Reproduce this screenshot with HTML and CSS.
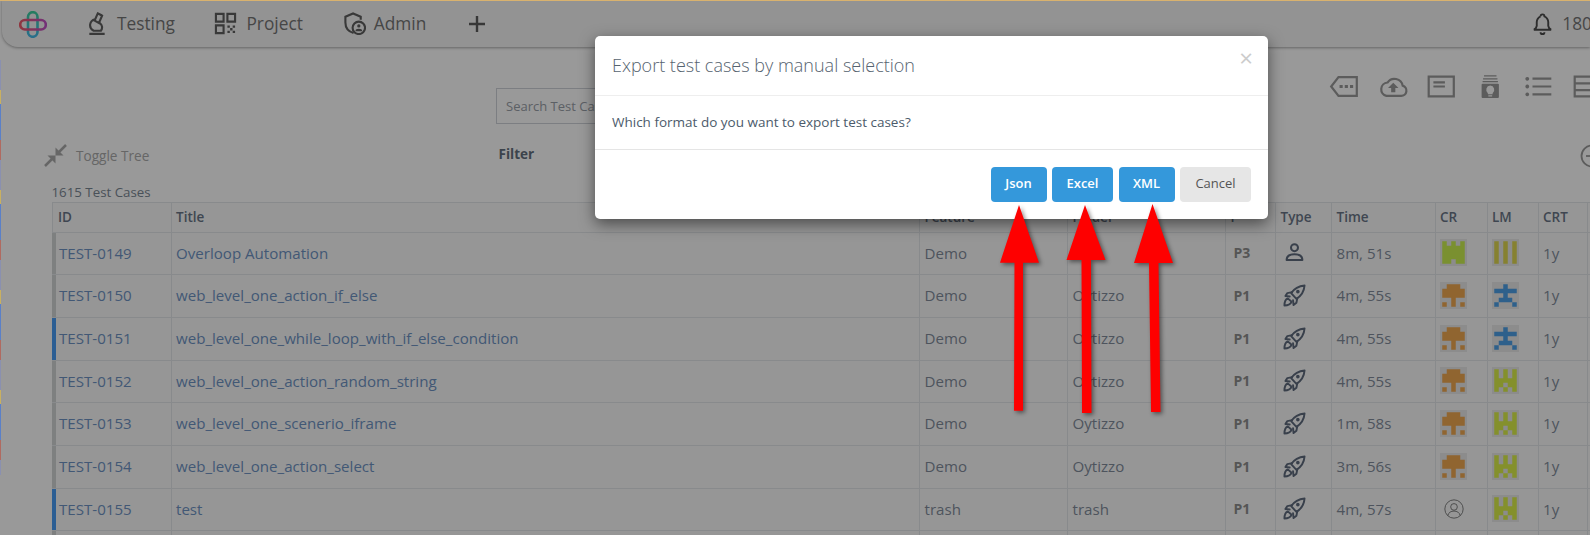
FILE: index.html
```html
<!DOCTYPE html>
<html lang="en">
<head>
<meta charset="utf-8">
<title>Test Cases</title>
<link rel="stylesheet" href="styles.css">
</head>
<body>
<svg class="defs" width="0" height="0" aria-hidden="true">
  <defs>
    <symbol id="rocket" viewBox="0 0 24 24"><path d="M22.500 1.500C16 2 11.500 5 8.500 9.500L14 15.500C19 12.500 22 8 22.500 1.500Z"/><path d="M9.500 8.500L4.500 9.500 2.500 12.500 7 13"/><path d="M15 14.500L14 19.500 11 22 10.500 17"/><path d="M5 15C2.500 16 1.500 19 1.500 22.500 5 22.500 8 21 9 18.500Z"/><circle class="win" cx="15.500" cy="8" r="1.900"/></symbol>
    <symbol id="castle" viewBox="0 0 60 60"><rect width="60" height="60" class="ib"/><path d="M5 5h10v10h10v-10h10v10h10v-10h10v50h-20v-10h-10v10h-20z"/></symbol>
    <symbol id="stripes" viewBox="0 0 60 60"><rect width="60" height="60" class="ib"/><path d="M5 5h10v50h-10zM25 5h10v50h-10zM45 5h10v50h-10z"/></symbol>
    <symbol id="mush" viewBox="0 0 60 60"><rect width="60" height="60" class="ib"/><path d="M15 5h30v10h10v20h-20v20h-10v-20h-20v-20h10zM5 45h10v10h-10zM45 45h10v10h-10z"/></symbol>
    <symbol id="man" viewBox="0 0 60 60"><rect width="60" height="60" class="ib"/><path d="M25 5h10v10h20v10h-20v10h10v10h-30v-10h10v-10h-20v-10h20z"/><path d="M5 45h10v10h-10zM45 45h10v10h-10z"/></symbol>
    <symbol id="fort" viewBox="0 0 60 60"><rect width="60" height="60" class="ib"/><path fill-rule="evenodd" d="M5 5h10v20h10v-20h10v20h10v-20h10v50h-10v-10h-10v10h-10v-10h-10v10h-10zM25 35h10v10h-10z"/></symbol>
  </defs>
</svg>

<header class="nav">
  <svg class="logo" viewBox="0 0 28 27" aria-hidden="true">
    <defs>
      <linearGradient id="lgv" x1="0" y1="0" x2="0" y2="1"><stop offset="0" stop-color="#3fd0a0"/><stop offset="1" stop-color="#45b8e8"/></linearGradient>
      <linearGradient id="lgh" x1="0" y1="0" x2="1" y2="0"><stop offset="0" stop-color="#ef5a6a"/><stop offset="1" stop-color="#c050c8"/></linearGradient>
    </defs>
    <rect x="9" y="1.2" width="9.5" height="24.6" rx="4.75" class="lgv"/>
    <rect x="1.2" y="9" width="25.6" height="9.5" rx="4.75" class="lgh"/>
  </svg>
  <a class="nav-item testing">
    <svg class="ic mic" viewBox="0 0 18 24" aria-hidden="true"><path d="M1 22.800h16M5 19.500h9M7 7.500a7 6.500 0 0 0 -1.500 12M9.800 1.500l-3.300 7.500 4.500 2.400 3.300-7.500zM9.500 1.200l4.800 2.500M12 11.500a5.500 5.500 0 0 1 1 8"/></svg>
    <span>Testing</span>
  </a>
  <a class="nav-item project">
    <svg class="ic" viewBox="0 0 24 24" aria-hidden="true"><path d="M2 2h8v8h-8zM14 2h8v8h-8zM2 14h8v8h-8z"/><path class="dots" d="M14 14h2.500v2.500h-2.500zM19.500 14h2.500v2.500h-2.500zM16.800 16.800h2.500v2.500h-2.500zM14 19.500h2.500v2.500h-2.500zM19.500 19.500h2.500v2.500h-2.500z"/></svg>
    <span>Project</span>
  </a>
  <a class="nav-item admin">
    <svg class="ic shield" viewBox="0 0 24 24" aria-hidden="true"><path d="M11 22c-5-1.500-8.500-5.500-8.500-11v-6l8-3.500 8 3.500v3"/><circle cx="16.500" cy="16.500" r="6.500"/><circle class="dots" cx="16.500" cy="14.500" r="1.700"/><path class="dots" d="M13 20a3.500 2.500 0 0 1 7 0z"/></svg>
    <span>Admin</span>
  </a>
  <svg class="plus" viewBox="0 0 16 16" aria-hidden="true"><path d="M8 0v16M0 8h16"/></svg>
  <div class="notif">
    <svg class="bell" viewBox="0 0 24 24" aria-hidden="true"><path d="M10 4.500a2 2 0 1 1 4 0a7 7 0 0 1 4 6v4a5 5 0 0 0 3 4h-18a5 5 0 0 0 3 -4v-4a7 7 0 0 1 4 -6"/><path d="M10 21a2 2 0 0 0 4 0"/></svg>
    <span>180</span>
  </div>
</header>

<section class="tools">
  <div class="search">Search Test Cases</div>
  <div class="tool-icons">
    <svg class="ti" viewBox="0 0 27 22"><path d="M8 2h17.500v18h-17.500l-7-9z"/><path class="fill" d="M9 9.500h3v3h-3zM14 9.500h3v3h-3zM19 9.500h3v3h-3z"/></svg>
    <svg class="ti" viewBox="0 0 27 22"><path d="M7 20h14a5 5 0 0 0 1.500-9.800a8 8 0 0 0-14.500-3a6.500 6.500 0 0 0-1 12.800z"/><path class="fill" d="M13.500 7.500l5 5h-3v4h-4v-4h-3z"/></svg>
    <svg class="ti" viewBox="0 0 27 22"><path d="M1.500 1.500h24v19h-24zM6 7h11M6 11h11"/></svg>
    <svg class="ti" viewBox="0 0 27 24"><path class="thin" d="M7 1h13M6 4h15M5.500 7h16"/><path class="fill" fill-rule="evenodd" d="M5.500 9h16a1 1 0 0 1 1 1v13a1 1 0 0 1-1 1h-16a1 1 0 0 1-1-1v-13a1 1 0 0 1 1-1zM13.500 11a4.500 4.500 0 0 0-2.500 8v1h5v-1a4.500 4.500 0 0 0-2.500-8zM11.500 21v1.500h4v-1.500z"/></svg>
    <svg class="ti" viewBox="0 0 27 22"><path d="M8 3.500h18M8 11h18M8 18.500h18"/><path class="fill" d="M3 1.800a1.800 1.800 0 1 1-.01 0zM3 9.200a1.800 1.800 0 1 1-.01 0zM3 16.700a1.800 1.800 0 1 1-.01 0z"/></svg>
    <svg class="ti" viewBox="0 0 27 22"><path d="M1.500 1.500h24v19h-24zM1.500 8h24M1.500 14.500h24"/></svg>
  </div>
</section>

<section class="filters">
  <svg class="shrink" viewBox="0 0 23 23" aria-hidden="true"><path class="ln" d="M1 22l7-7M22 1l-7 7"/><path class="tip" d="M3.500 11.500h8v8zM19.500 11.500h-8v-8z"/></svg>
  <span class="toggle">Toggle Tree</span>
  <strong class="filter">Filter</strong>
  <svg class="circ" viewBox="0 0 24 24" aria-hidden="true"><circle cx="12" cy="12" r="10.500"/><path d="M6 12h12"/></svg>
</section>

<p class="count">1615 Test Cases</p>

<table class="cases">
  <colgroup>
    <col class="c-id"><col class="c-title"><col class="c-feature"><col class="c-folder"><col class="c-p"><col class="c-type"><col class="c-time"><col class="c-cr"><col class="c-lm"><col class="c-crt"><col class="c-rest">
  </colgroup>
  <thead>
    <tr><th>ID</th><th>Title</th><th>Feature</th><th>Folder</th><th>P</th><th>Type</th><th>Time</th><th>CR</th><th>LM</th><th>CRT</th><th></th></tr>
  </thead>
  <tbody>
    <tr class="short">
      <td class="gray"><a>TEST-0149</a></td><td><a>Overloop Automation</a></td><td>Demo</td><td></td><td class="pri">P3</td>
      <td><svg class="type person" viewBox="0 0 24 24"><circle cx="12" cy="6.500" r="4"/><path d="M3 20.500c0-4.500 4-6.500 9-6.500s9 2 9 6.500z"/></svg></td>
      <td>8m, 51s</td><td><svg class="idn i-green"><use href="#castle"/></svg></td><td><svg class="idn i-yellow"><use href="#stripes"/></svg></td><td>1y</td><td></td>
    </tr>
    <tr>
      <td class="gray"><a>TEST-0150</a></td><td><a>web_level_one_action_if_else</a></td><td>Demo</td><td>Oytizzo</td><td class="pri">P1</td>
      <td><svg class="type"><use href="#rocket"/></svg></td>
      <td>4m, 55s</td><td><svg class="idn i-orange"><use href="#mush"/></svg></td><td><svg class="idn i-blue"><use href="#man"/></svg></td><td>1y</td><td></td>
    </tr>
    <tr>
      <td class="blue"><a>TEST-0151</a></td><td><a>web_level_one_while_loop_with_if_else_condition</a></td><td>Demo</td><td>Oytizzo</td><td class="pri">P1</td>
      <td><svg class="type"><use href="#rocket"/></svg></td>
      <td>4m, 55s</td><td><svg class="idn i-orange"><use href="#mush"/></svg></td><td><svg class="idn i-blue"><use href="#man"/></svg></td><td>1y</td><td></td>
    </tr>
    <tr class="short">
      <td class="gray"><a>TEST-0152</a></td><td><a>web_level_one_action_random_string</a></td><td>Demo</td><td>Oytizzo</td><td class="pri">P1</td>
      <td><svg class="type"><use href="#rocket"/></svg></td>
      <td>4m, 55s</td><td><svg class="idn i-orange"><use href="#mush"/></svg></td><td><svg class="idn i-lime"><use href="#fort"/></svg></td><td>1y</td><td></td>
    </tr>
    <tr>
      <td class="gray"><a>TEST-0153</a></td><td><a>web_level_one_scenerio_iframe</a></td><td>Demo</td><td>Oytizzo</td><td class="pri">P1</td>
      <td><svg class="type"><use href="#rocket"/></svg></td>
      <td>1m, 58s</td><td><svg class="idn i-orange"><use href="#mush"/></svg></td><td><svg class="idn i-lime"><use href="#fort"/></svg></td><td>1y</td><td></td>
    </tr>
    <tr>
      <td class="gray"><a>TEST-0154</a></td><td><a>web_level_one_action_select</a></td><td>Demo</td><td>Oytizzo</td><td class="pri">P1</td>
      <td><svg class="type"><use href="#rocket"/></svg></td>
      <td>3m, 56s</td><td><svg class="idn i-orange"><use href="#mush"/></svg></td><td><svg class="idn i-lime"><use href="#fort"/></svg></td><td>1y</td><td></td>
    </tr>
    <tr class="short">
      <td class="blue"><a>TEST-0155</a></td><td><a>test</a></td><td>trash</td><td>trash</td><td class="pri">P1</td>
      <td><svg class="type"><use href="#rocket"/></svg></td>
      <td>4m, 57s</td>
      <td><svg class="avatar" viewBox="0 0 24 24"><circle cx="12" cy="12" r="11"/><circle cx="12" cy="9.500" r="4"/><path d="M4.500 20c1-4 4-5.500 7.500-5.500s6.500 1.500 7.500 5.500"/></svg></td>
      <td><svg class="idn i-lime"><use href="#fort"/></svg></td><td>1y</td><td></td>
    </tr>
    <tr><td class="gray"></td><td></td><td></td><td></td><td></td><td></td><td></td><td></td><td></td><td></td><td></td></tr>
  </tbody>
</table>

<div class="backdrop"></div>

<div class="modal" role="dialog">
  <div class="modal-head">
    <h4>Export test cases by manual selection</h4>
    <span class="close">×</span>
  </div>
  <div class="modal-body">Which format do you want to export test cases?</div>
  <div class="modal-foot">
    <button class="btn primary b-json">Json</button>
    <button class="btn primary b-excel">Excel</button>
    <button class="btn primary b-xml">XML</button>
    <button class="btn cancel">Cancel</button>
  </div>
</div>

<svg class="arrows" viewBox="0 0 1590 535" aria-hidden="true">
  <path d="M1019 205L1039 262.700H1023L1023 410.700H1014L1014.500 262.700H1000Z"/>
  <path d="M1085 205L1105.500 260H1091L1091.500 413H1082L1081.500 260H1066.500Z"/>
  <path d="M1152.500 204L1173 263H1158.500L1160.500 412H1151L1149 263H1134Z"/>
</svg>
```

FILE: styles.css
```css
* { box-sizing: border-box; }
html, body { margin: 0; height: 535px; overflow: hidden; }
body {
  position: relative;
  width: 1590px;
  background: #fff;
  font-family: "Open Sans", "Liberation Sans", sans-serif;
  font-size: 14px;
  color: #828c98;
}
.defs { position: absolute; }

/* navbar */
.nav {
  display: flex;
  align-items: center;
  height: 47px;
  margin-left: 2px;
  padding-left: 17px;
  background: #f6f6f6;
  border-bottom-left-radius: 16px;
  box-shadow: 0 1px 3px rgba(0,0,0,.35);
  white-space: nowrap;
  color: #757575;
  font-size: 17.300px;
}
.logo { width: 28px; height: 27px; flex: none; margin-top: 1px; }
.logo rect { fill: none; stroke-width: 2.600; }
.lgv { stroke: url(#lgv); }
.lgh { stroke: url(#lgh); }
.nav-item { display: flex; align-items: center; }
.ic { width: 23px; height: 23px; fill: none; stroke: #5f5f5f; stroke-width: 2.200; flex: none; }
.ic.mic { width: 18px; }
.ic .dots { fill: #5f5f5f; stroke: none; }
.testing { margin-left: 41px; gap: 11px; }
.project { margin-left: 39.500px; gap: 9px; }
.admin { margin-left: 40px; gap: 8px; }
.plus { width: 16px; height: 16px; margin-left: 43px; fill: none; stroke: #5c5c5c; stroke-width: 2.400; flex: none; }
.notif { display: flex; align-items: center; gap: 8px; margin-left: 1046px; flex: none; }
.bell { width: 23px; height: 23px; fill: none; stroke: #4c4c4c; stroke-width: 2; }

/* toolbars */
.tools { display: flex; align-items: flex-start; margin-top: 28px; height: 49px; padding-left: 496px; }
.search {
  width: 300px; height: 36px; margin-top: 13px; padding: 0 9px;
  border: 1px solid #cfd3d9;
  font-size: 13px; line-height: 34px; color: #9aa0a8; white-space: nowrap; overflow: hidden;
  flex: none;
}
.tool-icons { display: flex; margin-left: 524px; flex: none; }
.ti { width: 48.500px; height: 23px; fill: none; stroke: #999; stroke-width: 2.100; }
.ti .fill { fill: #999; stroke: none; }
.ti .thin { stroke-width: 1.300; }

.filters { display: flex; align-items: center; margin-top: 20px; height: 23px; padding-left: 44px; position: relative; }
.shrink { width: 23px; height: 23px; flex: none; }
.shrink .ln { stroke: #aaa; stroke-width: 2.500; fill: none; }
.shrink .tip { fill: #aaa; }
.toggle { margin-left: 9px; font-size: 13.600px; color: #aaa; width: 350px; white-space: nowrap; flex: none; }
.filter { margin-left: 72.500px; margin-top: -4px; font-size: 13.500px; font-weight: 700; color: #64707e; flex: none; }
.circ { width: 24px; height: 24px; margin-left: 1046px; fill: none; stroke: #999; stroke-width: 1.800; flex: none; }

.count { margin: 17px 0 2px 51.500px; height: 16px; font-size: 13.300px; line-height: 16px; color: #7b8794; white-space: nowrap; }

/* table */
.cases {
  border-collapse: collapse;
  table-layout: fixed;
  width: 1595px;
  margin-left: 52px;
  background: #fafbfb;
}
.c-id { width: 118.500px; }
.c-title { width: 748.500px; }
.c-feature { width: 148px; }
.c-folder { width: 158px; }
.c-p { width: 50px; }
.c-type { width: 56px; }
.c-time { width: 103.500px; }
.c-cr { width: 52px; }
.c-lm { width: 51px; }
.c-crt { width: 49.500px; }
.c-rest { width: 60px; }
.cases th, .cases td {
  border: 1px solid #e3e6ea;
  padding: 0 4.500px 2px;
  text-align: left;
  white-space: nowrap;
  font-size: 15.100px;
}
.cases th:first-child { padding-left: 5px; }
.cases td:first-child { padding-left: 6px; }
.cases th { height: 30px; font-weight: 600; font-size: 13.500px; color: #6a7687; }
.cases tbody tr { height: 43px; }
.cases tbody tr.short { height: 42px; }
.cases td { color: #838d9c; }
.cases a { color: #6f93c4; }
.cases td:first-child { position: relative; }
.cases td:first-child::before {
  content: ""; position: absolute; left: -1px; top: 0; bottom: 0; width: 3.500px;
}
.gray::before { background: #d3d5d5; }
.blue::before { background: #4a9df5; }
.cases td.pri { font-weight: 700; font-size: 14px; padding-left: 7.500px; color: #8e8e8e; }
.type { display: block; width: 23px; height: 23px; margin-left: 2px; fill: none; stroke: #5f6b7e; stroke-width: 2; stroke-linejoin: round; stroke-linecap: round; }
.win { fill: #5f6b7e; stroke: none; }
.person { width: 21px; height: 21px; margin-left: 3px; stroke-width: 2.300; }
.idn { display: block; width: 27px; height: 27px; margin-left: 0; }
.ib { fill: #e9e9e9; }
.i-green { fill: #cbf050; }
.i-yellow { fill: #e0d850; }
.i-orange { fill: #f0a850; }
.i-blue { fill: #4da0e8; }
.i-lime { fill: #dcf04a; }
.avatar { display: block; width: 20px; height: 20px; margin-left: 4px; fill: none; stroke: #6a6a6a; stroke-width: 1; }

/* overlay */
.backdrop { position: absolute; inset: 0; background: rgba(0,0,0,.4); }
.backdrop::before { content: ""; position: absolute; left: 0; right: 0; top: 0; height: 1px; background: #d9b26e; }
.backdrop::after {
  content: ""; position: absolute; left: 0; top: 60px; bottom: 60px; width: 1px;
  background: repeating-linear-gradient(#8a90b0 0 30px, #c9b060 30px 44px, #5a80c8 44px 80px, #b06a60 80px 100px);
}

.modal {
  position: absolute; left: 595px; top: 36px; width: 673px; height: 183px;
  background: #fff; border-radius: 5px;
  box-shadow: 0 5px 15px rgba(0,0,0,.5);
  color: #4c5b6b;
}
.modal-head {
  display: flex; align-items: center; justify-content: space-between;
  height: 60px; padding: 0 15px 2px 17px;
  border-bottom: 1px solid #eee;
}
.modal-head h4 { margin: 0; font-size: 18px; font-weight: 300; color: #56636f; }
.close { color: #ccc; font-size: 24px; line-height: 1; margin: -14px 0 0 0; }
.modal-body { height: 54px; padding: 0 17px; font-size: 13.500px; line-height: 52px; border-bottom: 1px solid #e5e5e5; }
.modal-foot { display: flex; justify-content: flex-end; gap: 5.500px; padding: 17px 17px 0; }
.btn {
  height: 35px; border: 0; border-radius: 4px; padding: 0 0 3px;
  font-family: inherit; font-size: 13px; font-weight: 600;
}
.primary { background: #3498db; color: #fff; }
.b-json { width: 56px; }
.b-excel { width: 61px; }
.b-xml { width: 56px; }
.cancel { width: 71px; background: #e6e6e6; color: #555; font-weight: 400; }

.arrows { position: absolute; left: 0; top: 0; width: 1590px; height: 535px; fill: #fe0000; filter: drop-shadow(2px 2px 2px rgba(0,0,0,.45)); pointer-events: none; }
```
